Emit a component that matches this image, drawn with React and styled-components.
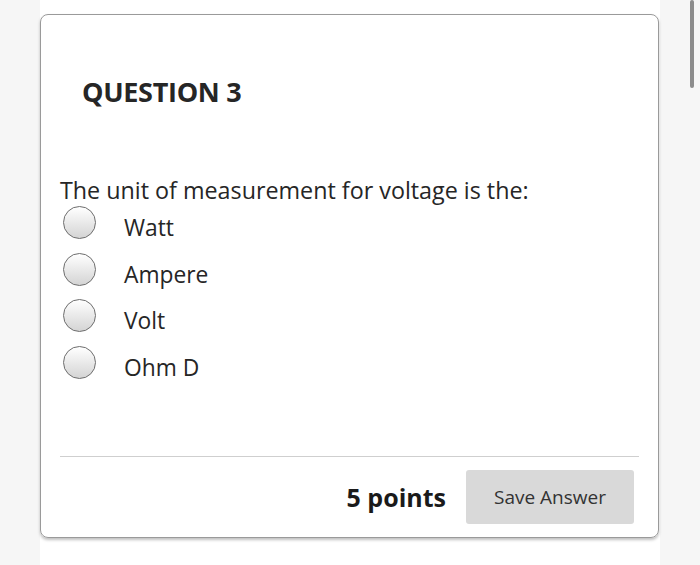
import React from 'react';
import styled, { createGlobalStyle } from 'styled-components';

const Global = createGlobalStyle`
  html, body {
    margin: 0;
    padding: 0;
    background: #f6f6f6;
    font-family: "Open Sans", "Liberation Sans", sans-serif;
  }
`;

const Page = styled.div`
  width: 620px;
  height: 565px;
  margin-left: 40px;
  background: #fff;
  padding-top: 14px;
  box-sizing: border-box;
`;

const Card = styled.div`
  width: 619px;
  height: 524px;
  box-sizing: border-box;
  border: 1.5px solid #9a9a9a;
  border-radius: 8px;
  box-shadow: 0 2px 3px rgba(0, 0, 0, 0.25);
  padding: 61px 19px 0 19px;
  display: flex;
  flex-direction: column;
`;

const Title = styled.h2`
  margin: 0 0 0 22px;
  font-size: 27px;
  font-weight: 700;
  color: #262626;
  line-height: 32px;
  letter-spacing: -0.3px;
`;

const Prompt = styled.p`
  margin: 67px 0 0 0;
  font-size: 23.3px;
  color: #262626;
  line-height: 30px;
`;

const Options = styled.div`
  display: flex;
  flex-direction: column;
  gap: 11.5px;
`;

const Option = styled.label`
  display: flex;
  align-items: center;
  gap: 28px;
  padding-left: 3px;
  font-size: 22.8px;
  color: #262626;
  height: 35px;
`;

const Radio = styled.span`
  width: 33px;
  height: 33px;
  box-sizing: border-box;
  border-radius: 50%;
  border: 1.5px solid #6d6d6d;
  background: linear-gradient(#ffffff, #d4d4d4);
  flex-shrink: 0;
`;

const OptionText = styled.span`
  position: relative;
  top: 5px;
`;

const Footer = styled.div`
  margin-top: auto;
  margin-bottom: 13px;
  border-top: 1.5px solid #cfcfcf;
  padding-top: 13px;
  display: flex;
  justify-content: flex-end;
  align-items: center;
  gap: 20px;
  padding-right: 5px;
`;

const Points = styled.span`
  font-size: 25px;
  font-weight: 700;
  color: #1a1a1a;
`;

const SaveButton = styled.button`
  width: 168px;
  height: 54px;
  border: none;
  border-radius: 3px;
  background: #d9d9d9;
  color: #333;
  font-family: "Open Sans", "Liberation Sans", sans-serif;
  font-size: 19px;
`;

const Scrollbar = styled.div`
  position: fixed;
  top: 0;
  left: 690px;
  width: 4px;
  height: 88px;
  border-radius: 2px;
  background: #8c8c8c;
`;

const answers = ['Watt', 'Ampere', 'Volt', 'Ohm D'];

export default function App() {
  return (
    <>
      <Global />
      <Page>
        <Card>
          <Title>QUESTION 3</Title>
          <Prompt>The unit of measurement for voltage is the:</Prompt>
          <Options>
            {answers.map((a) => (
              <Option key={a}>
                <Radio />
                <OptionText>{a}</OptionText>
              </Option>
            ))}
          </Options>
          <Footer>
            <Points>5 points</Points>
            <SaveButton>Save Answer</SaveButton>
          </Footer>
        </Card>
      </Page>
      <Scrollbar />
    </>
  );
}
